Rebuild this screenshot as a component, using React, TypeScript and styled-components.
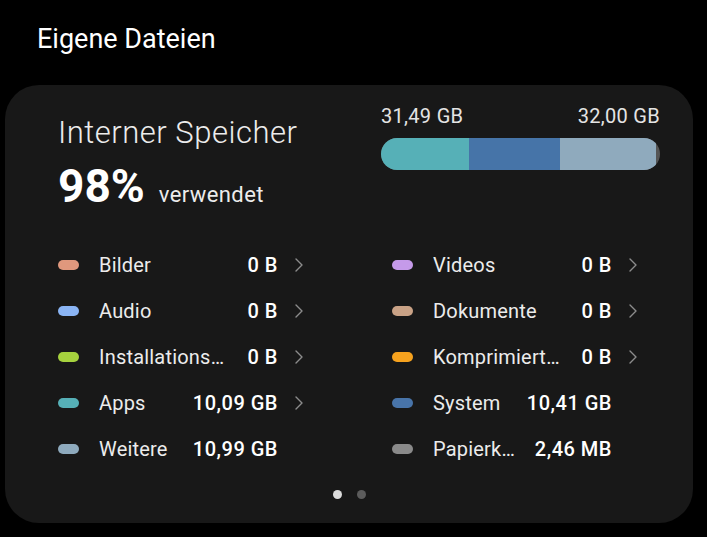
import styled, { createGlobalStyle } from 'styled-components'

const GlobalStyle = createGlobalStyle`
    html, body {
        margin: 0;
        padding: 0;
        background: #000;
    }

    body {
        font-family: Roboto, 'Noto Sans', 'Liberation Sans', sans-serif;
        color: #fff;
    }
`

const Page = styled.main`
    width: 707px;
    height: 537px;
    background: #000;
    padding: 21px 14px 0 5px;
    box-sizing: border-box;
`

const PageTitle = styled.h1`
    margin: 0 0 28px 32px;
    font-size: 27px;
    line-height: 36px;
    font-weight: 400;
    color: #fff;
`

const Card = styled.section`
    background: #181818;
    border-radius: 34px;
    padding: 20px 33px 24px 53px;
    box-sizing: border-box;
    height: 438px;
    display: flex;
    flex-direction: column;
`

const Top = styled.div`
    display: flex;
    justify-content: space-between;
`

const Summary = styled.div`
    margin-top: 10px;

    & h2 {
        margin: 0;
        font-size: 31px;
        line-height: 36px;
        font-weight: 300;
        letter-spacing: 0.5px;
        color: #ececec;
    }
`

const Usage = styled.p`
    margin: 10px 0 0;
    display: flex;
    align-items: baseline;
    gap: 14px;

    & strong {
        font-size: 46px;
        line-height: 50px;
        font-weight: 700;
        color: #fff;
    }

    & span {
        font-size: 22px;
        letter-spacing: 0.4px;
        color: #ececec;
    }
`

const BarBlock = styled.div`
    width: 279px;

    & .labels {
        display: flex;
        justify-content: space-between;
        font-size: 20px;
        line-height: 23px;
        letter-spacing: 0.3px;
        color: #e4e4e4;
    }
`

const Bar = styled.div`
    margin-top: 10px;
    height: 32px;
    border-radius: 16px;
    overflow: hidden;
    display: flex;
    background: #555;
`

const Segment = styled.div<{ $color: string }>`
    height: 100%;
    background: ${(p) => p.$color};
`

const Legend = styled.ul`
    list-style: none;
    margin: 31px 0 0;
    padding: 0;
    display: grid;
    grid-template-columns: 250px 250px;
    grid-auto-flow: column;
    grid-template-rows: repeat(5, 46px);
    column-gap: 84px;
`

const Row = styled.li`
    display: flex;
    align-items: center;
    font-size: 20px;
    letter-spacing: 0.2px;
    color: #ececec;
    min-width: 0;
`

const Swatch = styled.span<{ $color: string }>`
    flex: none;
    width: 21px;
    height: 10px;
    border-radius: 5px;
    background: ${(p) => p.$color};
    margin-right: 20px;
`

const Label = styled.span`
    flex: 1;
    min-width: 0;
    white-space: nowrap;
    overflow: hidden;
    text-overflow: ellipsis;
`

const Value = styled.span`
    flex: none;
    margin-left: 20px;
    font-weight: 500;
    letter-spacing: 0.5px;
    color: #fff;
`

const ChevronSlot = styled.span`
    flex: none;
    width: 30px;
    padding-left: 17px;
    box-sizing: border-box;
    display: flex;
    align-items: center;
`

const Pager = styled.div`
    margin: auto -33px 0 -53px;
    display: flex;
    justify-content: center;
    gap: 15px;
`

const PagerDot = styled.span<{ $active?: boolean }>`
    width: 9px;
    height: 9px;
    border-radius: 50%;
    background: ${(p) => (p.$active ? '#dcdcdc' : '#5c5c5c')};
`

const Chevron = () => (
    <svg width="8" height="14" viewBox="0 0 8 14">
        <polyline
            points="1,1 7,7 1,13"
            fill="none"
            stroke="#8c8c8c"
            strokeWidth="1.4"
            strokeLinecap="round"
            strokeLinejoin="round"
        />
    </svg>
)

const items = [
    { name: 'Bilder', value: '0 B', color: '#e0987d', link: true },
    { name: 'Audio', value: '0 B', color: '#8ab4f4', link: true },
    { name: 'Installationsdateien', value: '0 B', color: '#a6d23e', link: true },
    { name: 'Apps', value: '10,09 GB', color: '#56b0b7', link: true },
    { name: 'Weitere', value: '10,99 GB', color: '#8eaabd', link: false },
    { name: 'Videos', value: '0 B', color: '#c59ae9', link: true },
    { name: 'Dokumente', value: '0 B', color: '#c9a286', link: true },
    { name: 'Komprimierte Dateien', value: '0 B', color: '#f6a21e', link: true },
    { name: 'System', value: '10,41 GB', color: '#4874a9', link: false },
    { name: 'Papierkorb', value: '2,46 MB', color: '#8a8a8a', link: false },
]

const total = 32
const segments = [
    { size: 10.09, color: '#56b0b7' },
    { size: 10.41, color: '#4674a8' },
    { size: 10.99, color: '#8faabd' },
]

export default function App() {
    return (
        <Page>
            <GlobalStyle />
            <PageTitle>Eigene Dateien</PageTitle>

            <Card>
                <Top>
                    <Summary>
                        <h2>Interner Speicher</h2>
                        <Usage>
                            <strong>98%</strong>
                            <span>verwendet</span>
                        </Usage>
                    </Summary>

                    <BarBlock>
                        <div className="labels">
                            <span>31,49 GB</span>
                            <span>32,00 GB</span>
                        </div>
                        <Bar>
                            {segments.map((s) => (
                                <Segment
                                    key={s.color}
                                    $color={s.color}
                                    style={{ width: `${(s.size / total) * 100}%` }}
                                />
                            ))}
                        </Bar>
                    </BarBlock>
                </Top>

                <Legend>
                    {items.map((item) => (
                        <Row key={item.name}>
                            <Swatch $color={item.color} />
                            <Label>{item.name}</Label>
                            <Value>{item.value}</Value>
                            <ChevronSlot>{item.link && <Chevron />}</ChevronSlot>
                        </Row>
                    ))}
                </Legend>

                <Pager>
                    <PagerDot $active />
                    <PagerDot />
                </Pager>
            </Card>
        </Page>
    )
}
